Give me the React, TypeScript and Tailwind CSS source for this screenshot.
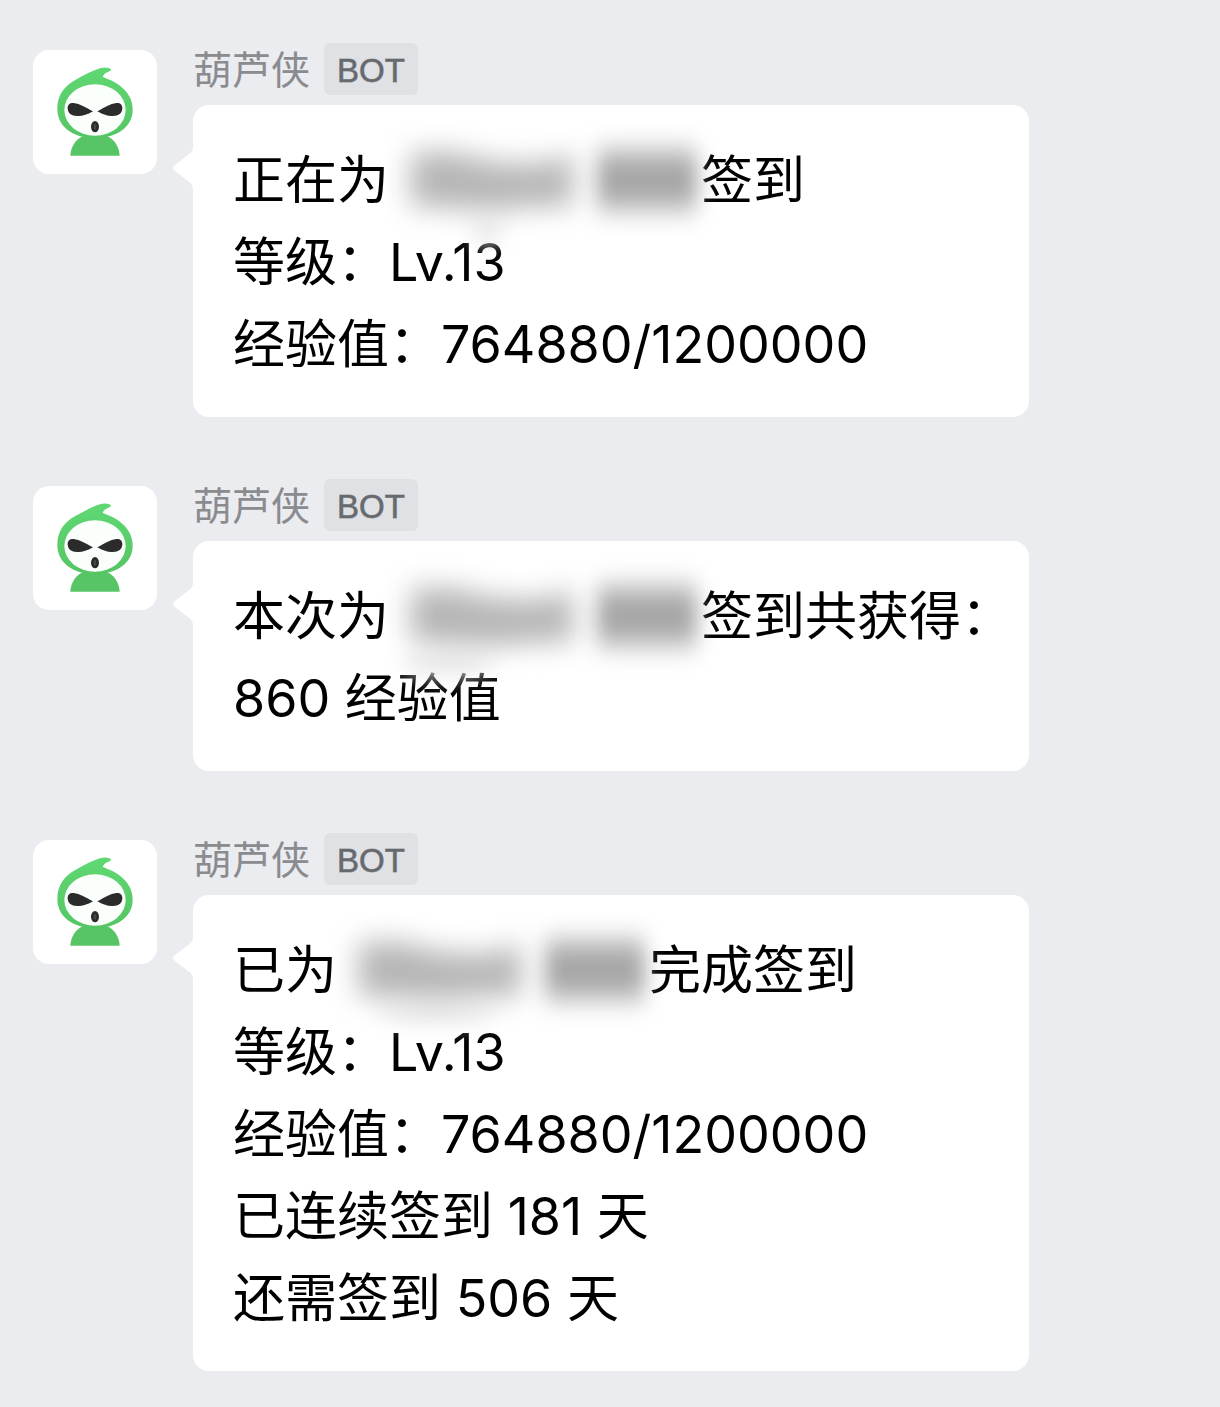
import type { ReactNode } from "react";

type Haze = { cx: number; cy: number; rx: number; ry: number };

function Avatar() {
  return (
    <svg
      viewBox="39 42 372 372"
      role="img"
      aria-label="葫芦侠"
      className="mt-[7px] size-[124px] shrink-0 rounded-2xl bg-white"
    >
      <defs>
        <linearGradient id="hood" x1="0" y1="0" x2="0" y2="1">
          <stop offset="0" stopColor="#5fd873" />
          <stop offset="1" stopColor="#55c564" />
        </linearGradient>
      </defs>
      <path
        d="M151 359C152 331 168 309 190 299H260C282 309 298 331 299 359Z"
        fill="#57c465"
      />
      <path
        d="M112 219C112 176 134 149 166 132C190 119 216 104 240 97C252 93 268 94 274 102C266 109 255 108 248 122C264 130 281 134 298 148C323 167 338 190 338 222C338 271 293 306 225 306C157 306 112 271 112 219Z"
        fill="url(#hood)"
      />
      <ellipse cx="225" cy="222" rx="92" ry="77" fill="#fbfffc" />
      <path
        d="M219 226C200 237 186 241 171 240C154 239 144 231 143 218C142 206 150 200 161 201C179 203 198 215 219 226Z"
        fill="#2b2b2b"
      />
      <path
        d="M232 226C252 237 264 241 279 240C296 239 306 231 307 218C308 206 300 200 289 201C271 203 253 215 232 226Z"
        fill="#2b2b2b"
      />
      <ellipse cx="225" cy="272" rx="12" ry="17" fill="#2b2b2b" />
      <ellipse cx="225" cy="272" rx="4" ry="9" fill="#454545" />
    </svg>
  );
}

function HiddenName({ haze }: { haze: Haze }) {
  return (
    <span className="relative inline-block h-[82px] w-[312px] shrink-0">
      <svg
        viewBox="0 0 312 82"
        aria-hidden="true"
        className="absolute inset-0 size-full overflow-visible"
      >
        <defs>
          <filter
            id="soft"
            x="-40%"
            y="-100%"
            width="180%"
            height="300%"
            colorInterpolationFilters="sRGB"
          >
            <feGaussianBlur stdDeviation="14" />
          </filter>
          <filter
            id="block"
            x="-60%"
            y="-100%"
            width="220%"
            height="300%"
            colorInterpolationFilters="sRGB"
          >
            <feGaussianBlur stdDeviation="10 14" />
          </filter>
          <filter
            id="fade"
            x="-50%"
            y="-100%"
            width="200%"
            height="300%"
            colorInterpolationFilters="sRGB"
          >
            <feGaussianBlur stdDeviation="5" />
          </filter>
          <filter
            id="mist"
            x="-100%"
            y="-200%"
            width="300%"
            height="500%"
            colorInterpolationFilters="sRGB"
          >
            <feGaussianBlur stdDeviation="10" />
          </filter>
        </defs>
        <rect x="4" y="6" width="304" height="68" rx="20" fill="#fff" filter="url(#fade)" />
        <ellipse
          cx={haze.cx}
          cy={haze.cy}
          rx={haze.rx}
          ry={haze.ry}
          fill="#ebebeb"
          filter="url(#mist)"
        />
        <path
          d="M22 12H64L104 22L150 24L184 14V66L150 66L104 70L22 66Z"
          fill="#b6b6b6"
          filter="url(#soft)"
        />
        <rect x="208" y="12" width="100" height="56" rx="4" fill="#a6a6a6" filter="url(#block)" />
      </svg>
    </span>
  );
}

function Line({ children }: { children: ReactNode }) {
  return <p className="flex whitespace-pre">{children}</p>;
}

function Message({ children }: { children: ReactNode }) {
  return (
    <article className="flex gap-9">
      <Avatar />
      <div className="min-w-0 max-w-[836px] flex-1">
        <header className="mb-[10px] flex h-[52px] items-center gap-[14px]">
          <span className="pt-[2px] text-[39px] leading-[52px] text-[#8a8b8f]">葫芦侠</span>
          <span className="flex h-full items-center rounded-md bg-[#e0e1e5] px-[13px] pt-1 font-['Liberation_Sans',sans-serif] text-[33px] text-[#66696d] [-webkit-text-stroke:1px_#66696d99]">
            BOT
          </span>
        </header>
        <div className="relative rounded-2xl bg-white pt-[35px] pb-[31px] pl-[40px] text-[52px] leading-[82px] text-black">
          <svg
            viewBox="0 0 20 44"
            aria-hidden="true"
            className="absolute top-[41px] right-full h-[44px] w-5"
          >
            <path d="M20 0C20 5 18 7 15 9L2 19Q-2 22 2 25L15 35C18 37 20 39 20 44Z" fill="#fff" />
          </svg>
          {children}
        </div>
      </div>
    </article>
  );
}

export default function App() {
  return (
    <main
      lang="zh-CN"
      className="flex min-h-screen flex-col gap-[62px] bg-[#ebecf0] px-[33px] pt-[43px] pb-9 font-[Inter,'Noto_Sans_CJK_SC',sans-serif]"
    >
      <Message>
        <Line>
          正在为
          <HiddenName haze={{ cx: 98, cy: 92, rx: 16, ry: 12 }} />
          签到
        </Line>
        <Line>等级：Lv.13</Line>
        <Line>经验值：764880/1200000</Line>
      </Message>
      <Message>
        <Line>
          本次为
          <HiddenName haze={{ cx: 58, cy: 88, rx: 46, ry: 12 }} />
          签到共获得：
        </Line>
        <Line>860 经验值</Line>
      </Message>
      <Message>
        <Line>
          已为
          <HiddenName haze={{ cx: 100, cy: 84, rx: 60, ry: 10 }} />
          完成签到
        </Line>
        <Line>等级：Lv.13</Line>
        <Line>经验值：764880/1200000</Line>
        <Line>已连续签到 181 天</Line>
        <Line>还需签到 506 天</Line>
      </Message>
    </main>
  );
}
